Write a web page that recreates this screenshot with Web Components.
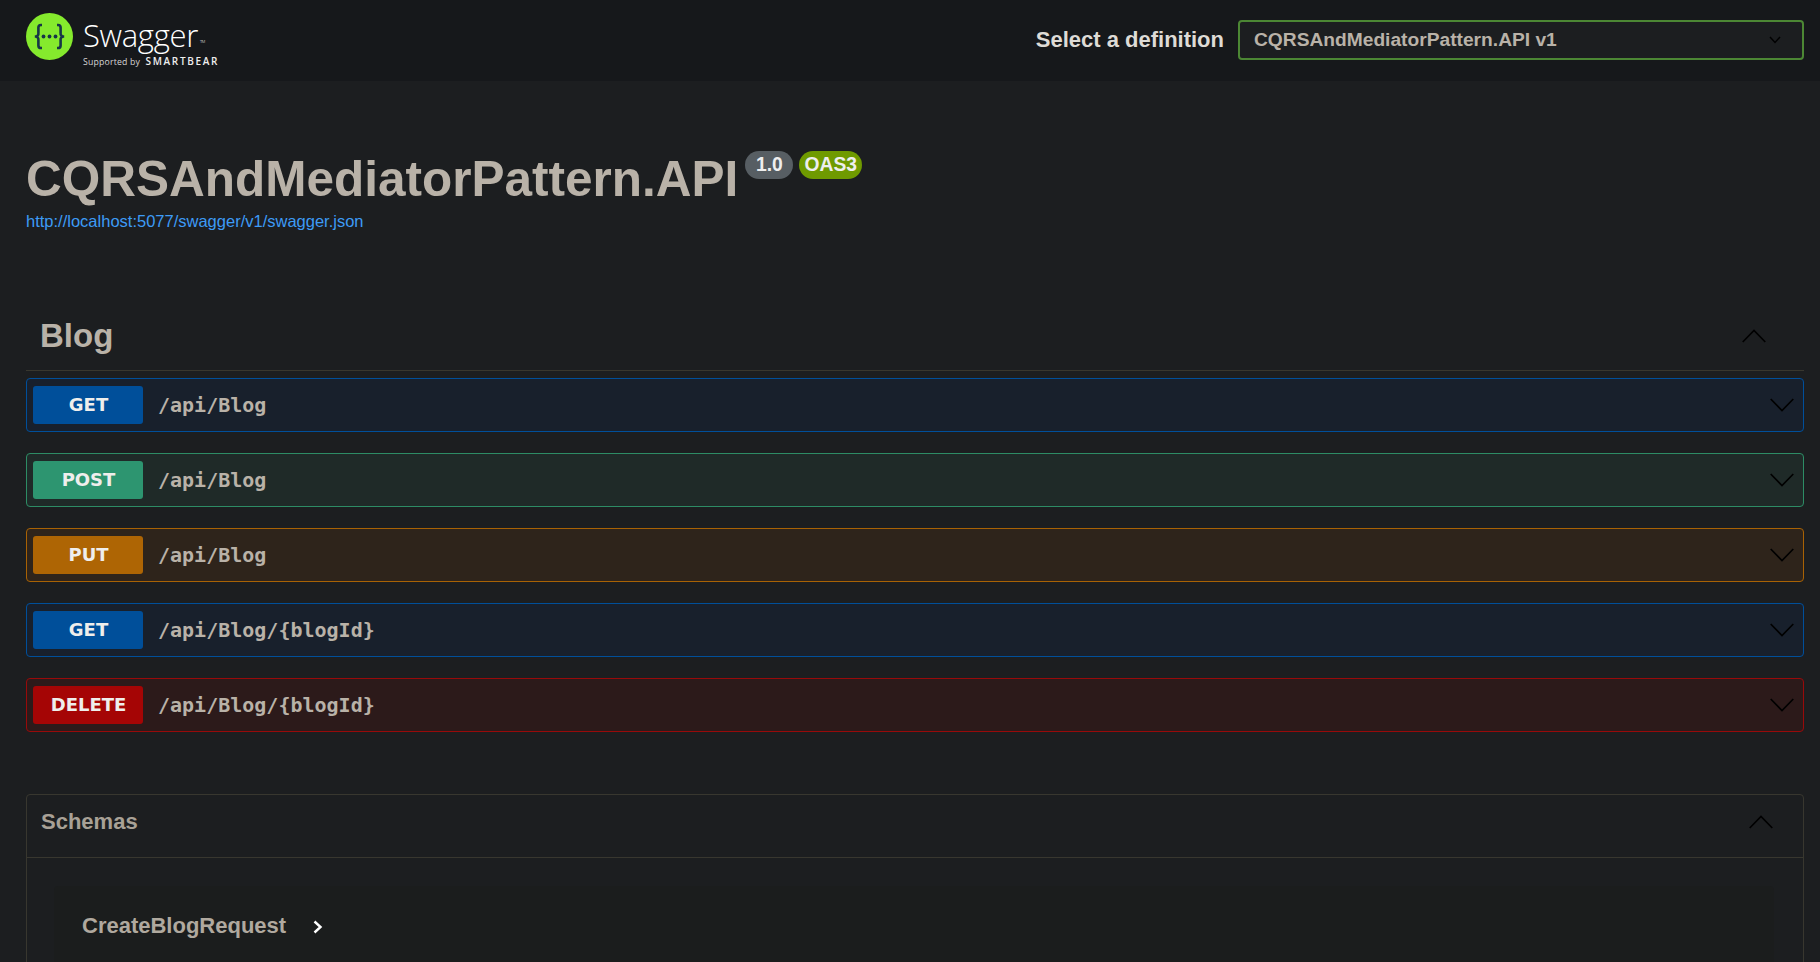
<!DOCTYPE html>
<html><head><meta charset="utf-8"><title>Swagger UI</title>
<style>
html,body{margin:0;padding:0;background:#1c1e20;height:962px;overflow:hidden}
body{font-family:"Liberation Sans",sans-serif;color:#b9b2a8}
</style></head><body>
<sw-topbar></sw-topbar>
<sw-info title-text="CQRSAndMediatorPattern.API" version="1.0" url="http://localhost:5077/swagger/v1/swagger.json"></sw-info>
<sw-tag name="Blog">
  <sw-op method="GET" path="/api/Blog"></sw-op>
  <sw-op method="POST" path="/api/Blog"></sw-op>
  <sw-op method="PUT" path="/api/Blog"></sw-op>
  <sw-op method="GET" path="/api/Blog/{blogId}"></sw-op>
  <sw-op method="DELETE" path="/api/Blog/{blogId}"></sw-op>
</sw-tag>
<sw-schemas><sw-model name="CreateBlogRequest"></sw-model></sw-schemas>
<script>
const chevron=(w,d)=>`<svg width="${w}" height="${w}" viewBox="0 0 20 20" style="display:block"><path fill="none" stroke="#000" stroke-width="1.4" d="${d}"/></svg>`;
const DOWN="M0.6 5 L10 14.6 L19.4 5", UP="M0.6 15 L10 5.4 L19.4 15";
class Base extends HTMLElement{
  constructor(){super();this.attachShadow({mode:"open"});}
  connectedCallback(){this.shadowRoot.innerHTML=this.render();}
}
customElements.define("sw-topbar",class extends Base{render(){return `<style>
:host{display:flex;align-items:center;justify-content:space-between;height:81px;box-sizing:border-box;padding:0 16px 0 26px;background:#16181b}
.logo{display:flex;align-items:flex-start;gap:10px;margin-bottom:1px}
.brand{display:flex;flex-direction:column;font-family:"Open Sans",sans-serif;color:#fff}
.name{font-size:31px;font-weight:300;line-height:34px;letter-spacing:-.3px;margin-top:5px;display:flex}
.tm{font-size:4px;align-self:flex-end;margin:0 0 8px 2px;line-height:4px}
.sup{font-size:8.7px;line-height:12px;margin-top:3px;color:#d6d6d6;white-space:nowrap;letter-spacing:.2px}
.sup b{font-size:10px;font-weight:600;letter-spacing:1.65px;margin-left:3px;color:#eee}
.sel{display:flex;align-items:center;gap:14px;margin-bottom:1px}
label{font-size:22px;font-weight:700;color:#dedbd6}
.box{width:566px;height:40px;box-sizing:border-box;border:2px solid #4c8734;border-radius:4px;background:#1c1e20;display:flex;align-items:center;justify-content:space-between;padding:0 21px 0 14px;font-size:19.2px;font-weight:700;color:#b9b2a8}
</style>
<div class="logo">
<svg width="47" height="47" viewBox="0 0 47 47"><circle cx="23.5" cy="23.5" r="23.5" fill="#85ea2d"/>
<path fill="none" stroke="#173647" stroke-width="2.6" d="M16 12 h-1 a2.6 2.6 0 0 0 -2.6 2.6 v5.4 a3 3 0 0 1 -3.4 3.5 a3 3 0 0 1 3.4 3.5 v5.4 a2.6 2.6 0 0 0 2.6 2.6 h1 M31 12 h1 a2.6 2.6 0 0 1 2.6 2.6 v5.4 a3 3 0 0 0 3.4 3.5 a3 3 0 0 0 -3.4 3.5 v5.4 a2.6 2.6 0 0 1 -2.6 2.6 h-1"/>
<circle cx="17.5" cy="23.5" r="1.9" fill="#173647"/><circle cx="23.5" cy="23.5" r="1.9" fill="#173647"/><circle cx="29.5" cy="23.5" r="1.9" fill="#173647"/></svg>
<div class="brand"><div class="name">Swagger<span class="tm">TM</span></div><div class="sup">Supported by <b>SMARTBEAR</b></div></div>
</div>
<div class="sel"><label>Select a definition</label><div class="box"><span>CQRSAndMediatorPattern.API v1</span>
<svg width="12" height="8" viewBox="0 0 12 8"><path fill="none" stroke="#000" stroke-width="1.5" d="M1 1 L6 6.5 L11 1"/></svg></div></div>`}});
customElements.define("sw-info",class extends Base{render(){return `<style>
:host{display:block;padding:66px 16px 0 26px;height:123px}
.t{display:flex;align-items:flex-start}
h1{margin:0;font-size:49.5px;line-height:64px;font-weight:700;color:#b9b2a8;letter-spacing:0}
.b{font-size:19.3px;font-weight:700;color:#eee;height:28px;line-height:27px;border-radius:14px;margin-top:4px;box-sizing:border-box;text-align:center}
.v{background:#575e63;margin-left:7px;width:48px}.o{background:#6f9a00;margin-left:6px;width:63px}
a{display:block;font-size:16.5px;line-height:18px;color:#3d9bf5;text-decoration:none;margin-top:1px}
</style>
<div class="t"><h1>${this.getAttribute("title-text")}</h1><span class="b v">${this.getAttribute("version")}</span><span class="b o">OAS3</span></div>
<a href="#">${this.getAttribute("url")}</a>`}});
customElements.define("sw-tag",class extends Base{render(){return `<style>
:host{display:block;padding:0 16px 0 26px;margin-top:32px}
header{display:flex;align-items:center;justify-content:space-between;height:69px;box-sizing:border-box;border-bottom:1px solid #38372f;padding:0 38px 0 14px}
h3{margin:0;font-size:33px;font-weight:700;color:#b9b2a8;line-height:40px}
.list{display:flex;flex-direction:column;gap:21px;margin-top:7px}
</style>
<header><h3>${this.getAttribute("name")}</h3>${chevron(24,UP)}</header>
<div class="list"><slot></slot></div>`}});
const C={GET:["#004f9a","#18202c","#004f9a"],POST:["#2d9570","#1f2a28","#2d8c65"],PUT:["#ae6504","#2e241b","#a86204"],DELETE:["#a50505","#2c1a1a","#980a0a"]};
customElements.define("sw-op",class extends Base{render(){const m=this.getAttribute("method"),c=C[m];return `<style>
:host{display:flex;align-items:center;height:54px;box-sizing:border-box;border:1px solid ${c[2]};border-radius:4px;background:${c[1]};padding:0 9px 0 6px}
.m{width:110px;height:38px;border-radius:3px;background:${c[0]};color:#efeeec;font-family:"DejaVu Sans",sans-serif;font-size:18px;font-weight:700;display:flex;align-items:center;justify-content:center;padding:0 0 2px 1px;box-sizing:border-box}
.p{font-family:"DejaVu Sans Mono",monospace;font-size:20px;font-weight:700;color:#b9b2a8;margin-left:15px;flex:1}
</style><span class="m">${m}</span><span class="p">${this.getAttribute("path")}</span>${chevron(24,DOWN)}`}});
customElements.define("sw-schemas",class extends Base{render(){return `<style>
:host{display:block;margin:62px 16px 0 26px;border:1px solid #38372f;border-radius:4px;height:400px;box-sizing:border-box}
header{display:flex;align-items:center;justify-content:space-between;height:63px;box-sizing:border-box;border-bottom:1px solid #38372f;padding:0 30px 8px 14px}
h4{margin:0;font-size:22px;font-weight:700;color:#a8a196}
.body{padding:28px 29px 0 27px}
</style><header><h4>Schemas</h4>${chevron(24,UP)}</header><div class="body"><slot></slot></div>`}});
customElements.define("sw-model",class extends Base{render(){return `<style>
:host{display:flex;background:#1b1d1d;border-radius:4px;height:300px;align-items:flex-start;box-sizing:border-box;padding:26px 28px}
span{font-size:22px;font-weight:700;color:#b0a99f;line-height:28px}
svg{margin:8px 0 0 27px}
</style><span>${this.getAttribute("name")}</span>
<svg width="10" height="14" viewBox="0 0 10 14"><path fill="none" stroke="#fff" stroke-width="2.4" d="M1.5 1.5 L7.5 7 L1.5 12.5"/></svg>`}});
</script>
</body></html>
